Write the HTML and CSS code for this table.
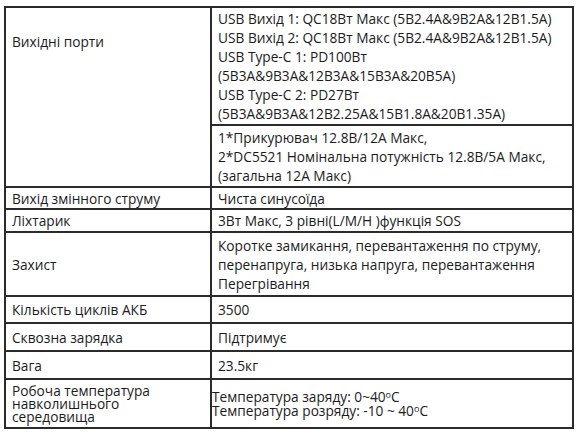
FILE: index.html
```html
<!DOCTYPE html>
<html lang="uk">
<head>
<meta charset="utf-8">
<link rel="stylesheet" href="styles.css">
</head>
<body>
<table class="spec">
  <colgroup><col class="c1"><col class="c2"></colgroup>
  <tr class="r1">
    <td class="label top" rowspan="2">Вихідні порти</td>
    <td class="val">USB Вихід 1: QC18Вт Макс (5В2.4А&amp;9В2А&amp;12В1.5А)<br>USB Вихід 2: QC18Вт Макс (5В2.4А&amp;9В2А&amp;12В1.5А)<br>USB Type-C 1: PD100Вт<br>(5В3А&amp;9В3А&amp;12В3А&amp;15В3А&amp;20В5А)<br>USB Type-C 2: PD27Вт<br>(5В3А&amp;9В3А&amp;12В2.25А&amp;15В1.8А&amp;20В1.35А)</td>
  </tr>
  <tr class="r2">
    <td class="val">1*Прикурювач 12.8В/12А Макс,<br>2*DC5521 Номінальна потужність 12.8В/5А Макс,<br>(загальна 12А Макс)</td>
  </tr>
  <tr class="r3">
    <td class="label">Вихід змінного струму</td>
    <td class="val">Чиста синусоїда</td>
  </tr>
  <tr class="r4">
    <td class="label">Ліхтарик</td>
    <td class="val">3Вт Макс, 3 рівні(L/M/H )функція SOS</td>
  </tr>
  <tr class="r5">
    <td class="label">Захист</td>
    <td class="val">Коротке замикання, перевантаження по струму,<br>перенапруга, низька напруга, перевантаження<br>Перегрівання</td>
  </tr>
  <tr class="r6">
    <td class="label">Кількість циклів АКБ</td>
    <td class="val">3500</td>
  </tr>
  <tr class="r7">
    <td class="label">Сквозна зарядка</td>
    <td class="val">Підтримує</td>
  </tr>
  <tr class="r8">
    <td class="label">Вага</td>
    <td class="val">23.5кг</td>
  </tr>
  <tr class="r9">
    <td class="label tight">Робоча температура<br>навколишнього<br>середовища</td>
    <td class="val flush">Температура заряду: 0~40<sup>о</sup>С<br>Температура розряду: -10 ~ 40<sup>о</sup>С</td>
  </tr>
</table>
</body>
</html>
```
FILE: styles.css
```css
html, body {
  margin: 0;
  padding: 0;
  background: #ffffff;
}
body {
  padding: 6px 0 0 4px;
  font-family: "Open Sans", "Noto Sans", sans-serif;
  font-size: 13.7px;
  color: #1b1b1b;
}
.spec {
  border-collapse: collapse;
  width: 568px;
  table-layout: fixed;
}
.c1 { width: 206px; }
.c2 { width: 362px; }
.spec td {
  border: 2px solid #2b2b2b;
  padding: 0 6px;
  line-height: 19px;
  vertical-align: middle;
  white-space: nowrap;
}
.spec td.top {
  vertical-align: top;
  padding-top: 24px;
}
.r1 { height: 118px; }
.r2 { height: 62px; }
.r3 { height: 22px; }
.r4 { height: 23px; }
.r5 { height: 64px; }
.r6 { height: 27px; }
.r7 { height: 28px; }
.r8 { height: 28px; }
.r9 { height: 49px; }
.spec td.tight {
  line-height: 13px;
}
.spec td.flush {
  padding-left: 0;
  line-height: 14px;
}
sup {
  font-size: 9px;
  line-height: 0;
  vertical-align: 4px;
}
```
